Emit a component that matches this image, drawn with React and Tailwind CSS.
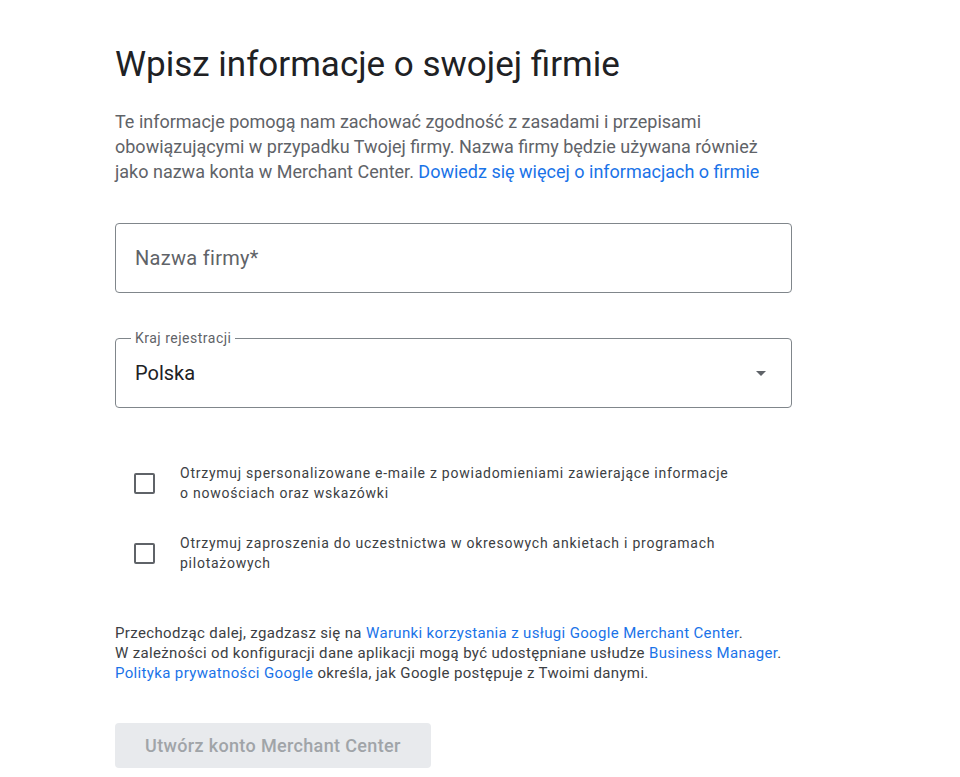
import React from "react";

const font = { fontFamily: "Roboto, 'Noto Sans', Arial, sans-serif" };

const CheckRow = ({ children }) => (
  <label className="flex items-center cursor-pointer">
    <div className="w-[65px] flex">
      <span className="ml-[19px] w-[21px] h-[21px] border-2 border-[#5f6368] rounded-[2px]" />
    </div>
    <span className="w-[558px] text-[14px] leading-[20px] tracking-[0.75px] text-[#3c4043]">
      {children}
    </span>
  </label>
);

export default function App() {
  return (
    <div className="min-h-screen bg-white" style={font}>
      <div className="pl-[115px] pt-[43px] w-[792px] box-content">
        <h1 className="text-[35px] leading-[44px] text-[#202124] font-normal">
          Wpisz informacje o swojej firmie
        </h1>

        <p className="mt-[22px] text-[18px] leading-[25px] text-[#5f6368] w-[677px]">
          Te informacje pomogą nam zachować zgodność z zasadami i przepisami
          obowiązującymi w przypadku Twojej firmy. Nazwa firmy będzie używana
          również jako nazwa konta w Merchant Center.{" "}
          <a href="#" className="text-[#1a73e8]">
            Dowiedz się więcej o informacjach o firmie
          </a>
        </p>

        {/* Nazwa firmy */}
        <div className="mt-[39px] w-[677px] h-[70px] border border-[#80868b] rounded-[4px] flex items-center px-[19px]">
          <span className="text-[20px] tracking-[0.3px] text-[#5f6368]">Nazwa firmy*</span>
        </div>

        {/* Kraj rejestracji */}
        <fieldset className="mt-[35px] w-[677px] border border-[#80868b] rounded-[4px] px-[19px]">
          <legend className="ml-[-4px] px-[4px] text-[14px] leading-[20px] tracking-[0.5px] text-[#5f6368]">
            Kraj rejestracji
          </legend>
          <div className="h-[59px] pb-[9px] flex items-center justify-between">
            <span className="text-[20px] text-[#202124]">Polska</span>
            <svg width="10" height="5" viewBox="0 0 10 5" className="mr-[6px]">
              <path d="M0 0h10L5 5z" fill="#5f6368" />
            </svg>
          </div>
        </fieldset>

        <div className="mt-[55px] flex flex-col gap-[30px]">
          <CheckRow>
            Otrzymuj spersonalizowane e-maile z powiadomieniami zawierające
            informacje o nowościach oraz wskazówki
          </CheckRow>
          <CheckRow>
            Otrzymuj zaproszenia do uczestnictwa w okresowych ankietach i
            programach pilotażowych
          </CheckRow>
        </div>

        <p className="mt-[50px] text-[15px] leading-[20px] tracking-[0.35px] text-[#3c4043]">
          Przechodząc dalej, zgadzasz się na{" "}
          <a href="#" className="text-[#1a73e8]">
            Warunki korzystania z usługi Google Merchant Center
          </a>
          .
          <br />W zależności od konfiguracji dane aplikacji mogą być
          udostępniane usłudze{" "}
          <a href="#" className="text-[#1a73e8]">
            Business Manager
          </a>
          .
          <br />
          <a href="#" className="text-[#1a73e8]">
            Polityka prywatności Google
          </a>{" "}
          określa, jak Google postępuje z Twoimi danymi.
        </p>

        <button
          disabled
          className="mt-[40px] w-[316px] h-[45px] rounded-[4px] bg-[#e8eaed] text-[18px] tracking-[0.35px] text-[#a0a4a8] font-medium flex items-center pl-[30px]"
        >
          Utwórz konto Merchant Center
        </button>
      </div>
    </div>
  );
}
